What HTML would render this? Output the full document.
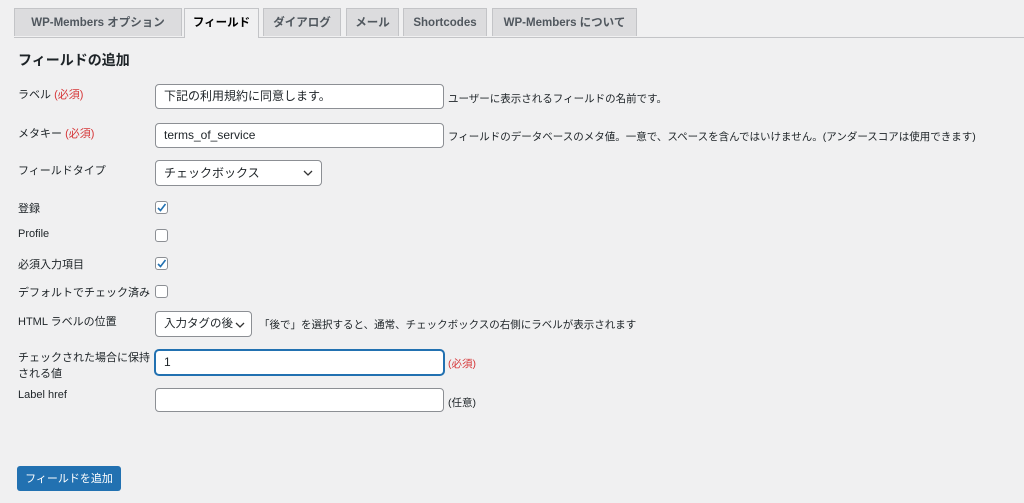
<!DOCTYPE html>
<html><head><meta charset="utf-8"><style>
body{margin:0;width:1024px;height:503px;background:#f0f0f1;font-family:"Liberation Sans","Noto Sans CJK JP",sans-serif;font-size:11px;color:#1d2327;position:relative;overflow:hidden}
.a{position:absolute;white-space:nowrap}
.tab{position:absolute;top:8px;height:28px;background:#dcdcde;border:1px solid #c3c4c7;border-bottom:none;font-weight:bold;font-size:11.5px;color:#50575e;line-height:28px;text-align:center;box-sizing:border-box}
.tab.on{background:#f0f0f1;color:#000;height:30px}
.line{position:absolute;left:14px;right:0;top:37px;border-top:1px solid #c3c4c7}
.in{position:absolute;background:#fff;border:1px solid #8c8f94;border-radius:4px;box-sizing:border-box;font-size:12px;line-height:23px;padding-left:8px}
.cb{position:absolute;left:155px;width:13px;height:13px;border:1px solid #8c8f94;border-radius:3px;background:#fff;box-sizing:border-box}
.req{color:#d63638}
</style></head><body>
<div class="line"></div>
<div class="tab" style="left:14px;width:168px">WP-Members オプション</div>
<div class="tab on" style="left:184px;width:75px">フィールド</div>
<div class="tab" style="left:263px;width:78px">ダイアログ</div>
<div class="tab" style="left:346px;width:53px">メール</div>
<div class="tab" style="left:403px;width:84px">Shortcodes</div>
<div class="tab" style="left:492px;width:145px">WP-Members について</div>
<div class="a" style="left:18px;top:50px;font-size:14px;font-weight:bold">フィールドの追加</div>

<div class="a" style="left:18px;top:86px">ラベル <span class="req">(必須)</span></div>
<div class="in" style="left:155px;top:84px;width:289px;height:25px">下記の利用規約に同意します。</div>
<div class="a" style="left:448px;top:91px;font-size:10.5px">ユーザーに表示されるフィールドの名前です。</div>

<div class="a" style="left:18px;top:125px">メタキー <span class="req">(必須)</span></div>
<div class="in" style="left:155px;top:123px;width:289px;height:25px">terms_of_service</div>
<div class="a" style="left:448px;top:129px;font-size:10.5px">フィールドのデータベースのメタ値。一意で、スペースを含んではいけません。(アンダースコアは使用できます)</div>

<div class="a" style="left:18px;top:162px">フィールドタイプ</div>
<div class="in" style="left:155px;top:160px;width:167px;height:26px;line-height:24px">チェックボックス<svg style="position:absolute;right:8px;top:9px" width="10" height="6"><path d="M1 1l4 4 4-4" fill="none" stroke="#333" stroke-width="1.3"/></svg></div>

<div class="a" style="left:18px;top:200px">登録</div>
<div class="cb" style="top:201px"><svg width="11" height="11" style="position:absolute;left:0;top:0"><path d="M2 6l2.5 2.5L9.5 2" fill="none" stroke="#2271b1" stroke-width="1.6"/></svg></div>
<div class="a" style="left:18px;top:228px">Profile</div>
<div class="cb" style="top:229px"></div>
<div class="a" style="left:18px;top:256px">必須入力項目</div>
<div class="cb" style="top:257px"><svg width="11" height="11" style="position:absolute;left:0;top:0"><path d="M2 6l2.5 2.5L9.5 2" fill="none" stroke="#2271b1" stroke-width="1.6"/></svg></div>
<div class="a" style="left:18px;top:284px">デフォルトでチェック済み</div>
<div class="cb" style="top:285px"></div>

<div class="a" style="left:18px;top:313px">HTML ラベルの位置</div>
<div class="in" style="left:155px;top:311px;width:97px;height:26px;line-height:24px;font-size:11.5px">入力タグの後<svg style="position:absolute;right:6px;top:10px" width="10" height="6"><path d="M1 1l4 4 4-4" fill="none" stroke="#333" stroke-width="1.3"/></svg></div>
<div class="a" style="left:259px;top:317px;font-size:10.5px">「後で」を選択すると、通常、チェックボックスの右側にラベルが表示されます</div>

<div class="a" style="left:18px;top:350px;line-height:16px">チェックされた場合に保持<br>される値</div>
<div class="in" style="left:155px;top:350px;width:289px;height:25px;border-color:#2271b1;box-shadow:0 0 0 1px #2271b1">1</div>
<div class="a req" style="left:448px;top:356px;font-size:10.5px">(必須)</div>

<div class="a" style="left:18px;top:389px">Label href</div>
<div class="in" style="left:155px;top:388px;width:289px;height:24px"></div>
<div class="a" style="left:448px;top:395px;font-size:10.5px">(任意)</div>

<div class="a" style="left:17px;top:466px;width:104px;height:25px;background:#2271b1;border-radius:3px;color:#fff;text-align:center;line-height:26px;font-size:11px">フィールドを追加</div>
</body></html>
